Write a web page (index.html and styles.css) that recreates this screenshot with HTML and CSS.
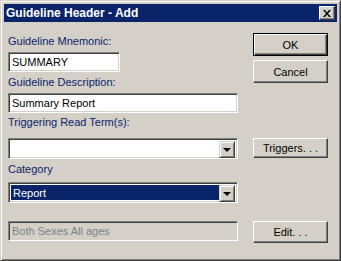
FILE: index.html
```html
<!DOCTYPE html>
<html lang="en">
<head>
    <meta charset="UTF-8">
    <title>Guideline Header - Add</title>
    <link rel="stylesheet" href="styles.css">
</head>
<body>
    <div class="window">
        <div class="titlebar">
            <span class="title">Guideline Header - Add</span>
            <span class="close-btn">
                <svg width="8" height="7" viewBox="0 0 8 7">
                    <path d="M0 0h2l2 2.5l2-2.5h2l-3 3.5l3 3.5h-2l-2-2.5l-2 2.5h-2l3-3.5z" fill="#000"/>
                </svg>
            </span>
        </div>
        <div class="content">
            <div class="left-col">
                <label class="lbl lbl-mnemonic">Guideline Mnemonic:</label>
                <div class="field field-mnemonic">SUMMARY</div>
                <label class="lbl lbl-desc">Guideline Description:</label>
                <div class="field field-desc">Summary Report</div>
                <label class="lbl lbl-trigger">Triggering Read Term(s):</label>
                <div class="combo combo-trigger">
                    <div class="combo-text"></div>
                    <span class="drop-btn"><span class="arrow"></span></span>
                </div>
                <label class="lbl lbl-category">Category</label>
                <div class="combo combo-category">
                    <div class="combo-text selected">Report</div>
                    <span class="drop-btn"><span class="arrow"></span></span>
                </div>
                <div class="field field-disabled">Both Sexes All ages</div>
            </div>
            <div class="right-col">
                <button class="btn btn-ok">OK</button>
                <button class="btn btn-cancel">Cancel</button>
                <button class="btn btn-triggers">Triggers. . .</button>
                <button class="btn btn-edit">Edit. . .</button>
            </div>
        </div>
    </div>
</body>
</html>
```

FILE: styles.css
```css
body {
    margin: 0;
    font-family: "Liberation Sans", Arial, sans-serif;
    font-size: 11px;
    background-color: #d4d0c8;
}
.window {
    width: 341px;
    height: 261px;
    box-sizing: border-box;
    background-color: #d4d0c8;
    border: 1px solid;
    border-color: #d4d0c8 #404040 #404040 #d4d0c8;
    box-shadow: inset 1px 1px #fff, inset -1px -1px #808080;
    padding: 3px;
}
.titlebar {
    height: 18px;
    background-color: #0a246a;
    display: flex;
    align-items: center;
    justify-content: space-between;
    padding: 0 2px 0 2px;
}
.title {
    color: white;
    font-weight: bold;
    font-size: 12px;
}
.close-btn {
    width: 16px;
    height: 14px;
    box-sizing: border-box;
    background-color: #d4d0c8;
    border: 1px solid;
    border-color: #fff #404040 #404040 #fff;
    box-shadow: inset -1px -1px #808080;
    display: flex;
    align-items: center;
    justify-content: center;
}
.close-btn svg {
    display: block;
    margin-left: -1px;
}
.content {
    display: flex;
    gap: 15px;
    padding-left: 4px;
}
.left-col {
    width: 230px;
    display: flex;
    flex-direction: column;
    align-items: flex-start;
    padding-top: 13px;
}
.lbl {
    color: #0a246a;
    line-height: 13px;
    height: 13px;
}
.lbl-mnemonic { margin-top: 0; }
.lbl-desc { margin-top: 4px; }
.lbl-trigger { margin-top: 3px; }
.lbl-category { margin-top: 4px; }
.field {
    height: 20px;
    box-sizing: border-box;
    background-color: white;
    border: 1px solid;
    border-color: #808080 #fff #fff #808080;
    box-shadow: inset 1px 1px #404040, inset -1px -1px #d4d0c8;
    padding: 2px 0 0 3px;
    line-height: 15px;
    color: #000;
    white-space: nowrap;
}
.field-mnemonic {
    width: 112px;
    margin-top: 4px;
}
.field-desc {
    width: 230px;
    margin-top: 4px;
}
.field-disabled {
    width: 230px;
    margin-top: 18px;
    background-color: #d4d0c8;
    color: #808080;
}
.combo {
    width: 230px;
    height: 21px;
    box-sizing: border-box;
    background-color: white;
    border: 1px solid;
    border-color: #808080 #fff #fff #808080;
    box-shadow: inset 1px 1px #404040, inset -1px -1px #d4d0c8;
    padding: 2px;
    display: flex;
}
.combo-trigger { margin-top: 9px; }
.combo-category { margin-top: 6px; }
.combo-text {
    flex: 1;
    line-height: 17px;
    padding-left: 2px;
}
.combo-text.selected {
    background-color: #0a246a;
    color: white;
}
.drop-btn {
    width: 16px;
    height: 17px;
    box-sizing: border-box;
    background-color: #d4d0c8;
    border: 1px solid;
    border-color: #d4d0c8 #404040 #404040 #d4d0c8;
    box-shadow: inset 1px 1px #fff, inset -1px -1px #808080;
    display: flex;
    align-items: center;
    justify-content: center;
}
.arrow {
    width: 0;
    height: 0;
    border-left: 4px solid transparent;
    border-right: 4px solid transparent;
    border-top: 4px solid #000;
    margin-top: 1px;
}
.right-col {
    width: 75px;
    display: flex;
    flex-direction: column;
    padding-top: 11px;
}
.btn {
    font-family: "Liberation Sans", Arial, sans-serif;
    font-size: 11px;
    color: #000;
    background-color: #d4d0c8;
    width: 75px;
    height: 23px;
    box-sizing: border-box;
    border: 1px solid;
    border-color: #fff #404040 #404040 #fff;
    box-shadow: inset -1px -1px #808080;
    padding: 0;
    cursor: pointer;
}
.btn-ok {
    border: 1px solid #000;
    box-shadow: inset 1px 1px #fff, inset -1px -1px #404040, inset -2px -2px #808080;
}
.btn-cancel { margin-top: 4px; }
.btn-triggers {
    height: 20px;
    margin-top: 55px;
}
.btn-edit {
    height: 22px;
    margin-top: 63px;
}
```
